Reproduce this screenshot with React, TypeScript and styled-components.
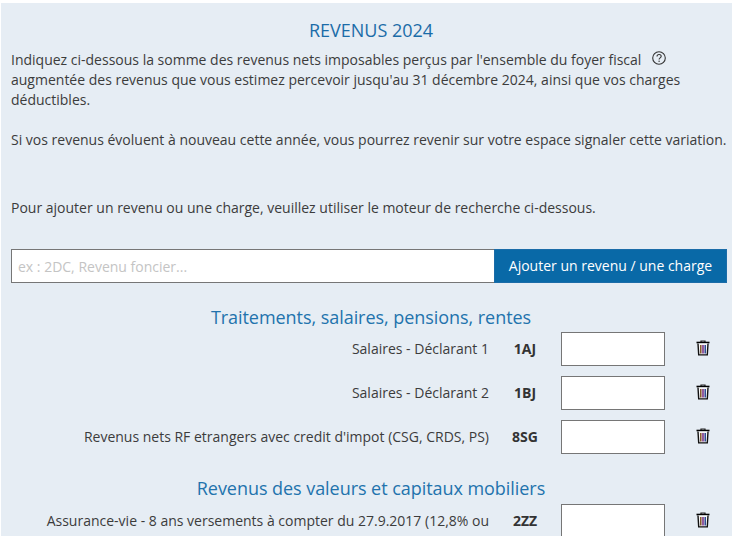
import React from "react";
import styled, { createGlobalStyle } from "styled-components";

const Global = createGlobalStyle`
  html, body { margin: 0; padding: 0; background: #fff; overflow: hidden; height: 536px; }
  * { box-sizing: border-box; }
`;

const Panel = styled.main`
  margin: 3px 0 0 1px;
  padding: 15px 5px 0 10px;
  min-height: 533px;
  background: #e6edf4;
  font-family: "Open Sans", sans-serif;
  font-size: 14px;
  line-height: 20px;
  color: #3c3c3c;
`;

const Title = styled.h1`
  margin: 0 0 8px;
  padding-left: 4px;
  text-align: center;
  font-size: 18px;
  font-weight: 400;
  line-height: 24px;
  color: #1b6ca8;
`;

const Para = styled.p<{ $after: number }>`
  margin: 0 0 ${(p) => p.$after}px;
  white-space: nowrap;
`;

const Help = styled.svg`
  display: inline-block;
  width: 16px;
  height: 16px;
  margin-left: 10px;
  vertical-align: -1px;
`;

const Search = styled.form`
  display: flex;
  height: 34px;
  margin-bottom: 22px;
`;

const SearchInput = styled.input`
  flex: 1;
  min-width: 0;
  height: 34px;
  padding: 0 6px;
  border: 1px solid #767676;
  border-right: 0;
  border-radius: 0;
  background: #fff;
  font: 14px/20px "Open Sans", sans-serif;
  outline: none;
  &::placeholder { color: #c4c4c4; opacity: 1; }
`;

const SearchButton = styled.button`
  width: 233px;
  height: 34px;
  border: 1px solid #1b6ca8;
  border-radius: 0;
  background: #0969a7;
  color: #fff;
  font: 14px/20px "Open Sans", sans-serif;
  padding: 0;
`;

const SectionTitle = styled.h2<{ $top?: number; $after?: number }>`
  margin: ${(p) => p.$top ?? 0}px 0 ${(p) => p.$after ?? 3}px;
  padding-left: 4px;
  text-align: center;
  font-size: 18px;
  font-weight: 400;
  line-height: 24px;
  letter-spacing: -0.05px;
  color: #2273ad;
`;

const Row = styled.div`
  display: grid;
  grid-template-columns: 478px 72px 104px 76px;
  height: 34px;
  margin-bottom: 10px;
`;

const Label = styled.label`
  text-align: right;
  padding-top: 7px;
  white-space: nowrap;
  height: 34px;
  overflow: hidden;
`;

const Code = styled.span`
  text-align: center;
  padding-top: 7px;
  font-weight: 700;
  color: #333;
`;

const Amount = styled.input`
  width: 104px;
  height: 34px;
  border: 1px solid #767676;
  border-radius: 0;
  background: #fff;
  outline: none;
`;

const Trash = styled.svg`
  width: 14px;
  height: 16px;
  margin: 8px 0 0 31px;
`;

const TrashIcon = () => (
  <Trash viewBox="0 0 14 16" aria-hidden="true">
    <path d="M5 2V1h4v1" fill="none" stroke="#222" strokeWidth="1.2" />
    <path d="M.5 2.5h13" stroke="#000" strokeWidth="1.6" />
    <path d="M2 3.5l.7 11.4h8.6L12 3.5" fill="#f6f6f6" stroke="#111" strokeWidth="1.4" />
    <path d="M4.8 5v8.5" stroke="#7a4a1a" strokeWidth="1.4" />
    <path d="M7 5v8.5" stroke="#6a1a7a" strokeWidth="1.4" />
    <path d="M9.2 5v8.5" stroke="#1a3a8a" strokeWidth="1.4" />
  </Trash>
);

const rowsA = [
  ["Salaires - Déclarant 1", "1AJ"],
  ["Salaires - Déclarant 2", "1BJ"],
  ["Revenus nets RF etrangers avec credit d'impot (CSG, CRDS, PS)", "8SG"],
];

const FormRow = ({ label, code }: { label: string; code: string }) => (
  <Row>
    <Label>{label}</Label>
    <Code>{code}</Code>
    <Amount aria-label={code} />
    <TrashIcon />
  </Row>
);

export default function App() {
  return (
    <>
      <Global />
      <Panel>
        <Title>REVENUS 2024</Title>
        <Para $after={20}>
          Indiquez ci-dessous la somme des revenus nets imposables perçus par l'ensemble du foyer fiscal
          <Help viewBox="0 0 16 16" aria-hidden="true">
            <circle cx="8" cy="8" r="6.3" fill="none" stroke="#333" strokeWidth="1.1" />
            <path d="M6 6.4c0-2.6 4.2-2.6 4.2-.1 0 1.6-2.1 1.5-2.1 3.2" fill="none" stroke="#333" strokeWidth="1.1" />
            <circle cx="8.1" cy="11.3" r=".7" fill="#333" />
          </Help>
          <br />
          augmentée des revenus que vous estimez percevoir jusqu'au 31 décembre 2024, ainsi que vos charges
          <br />
          déductibles.
        </Para>
        <Para $after={48}>
          Si vos revenus évoluent à nouveau cette année, vous pourrez revenir sur votre espace signaler cette variation.
        </Para>
        <Para $after={31}>
          Pour ajouter un revenu ou une charge, veuillez utiliser le moteur de recherche ci-dessous.
        </Para>
        <Search>
          <SearchInput placeholder="ex : 2DC, Revenu foncier..." />
          <SearchButton type="button">Ajouter un revenu / une charge</SearchButton>
        </Search>
        <SectionTitle>Traitements, salaires, pensions, rentes</SectionTitle>
        {rowsA.map(([l, c]) => (
          <FormRow key={c} label={l} code={c} />
        ))}
        <SectionTitle $top={22} $after={4}>Revenus des valeurs et capitaux mobiliers</SectionTitle>
        <FormRow label="Assurance-vie - 8 ans versements à compter du 27.9.2017 (12,8% ou" code="2ZZ" />
      </Panel>
    </>
  );
}
